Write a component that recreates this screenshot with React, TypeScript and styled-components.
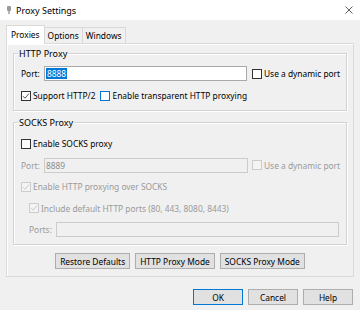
import React from "react";
import styled, { createGlobalStyle, css } from "styled-components";

const GlobalStyle = createGlobalStyle`
  html, body {
    margin: 0;
    padding: 0;
    background: #f0f0f0;
  }
  body {
    font-family: "Noto Sans", "Segoe UI", Arial, sans-serif;
    font-size: 8.4px;
    color: #000;
  }
`;

const Window = styled.div`
  width: 360px;
  height: 310px;
  background: #f0f0f0;
  display: flex;
  flex-direction: column;
  overflow: hidden;
  position: relative;
`;

const TitleBar = styled.div`
  height: 20px;
  background: #fff;
  display: flex;
  align-items: center;
  padding: 0 6px 0 6px;
  font-size: 9px;
`;

const TitleText = styled.span`
  margin-left: 4px;
`;

const CloseButton = styled.div`
  margin-left: auto;
  width: 9px;
  height: 9px;
  display: flex;
  align-items: center;
  justify-content: center;
  margin-right: 1px;
`;

const Body = styled.div`
  flex: 1;
  padding: 6px 6px 0 6px;
  display: flex;
  flex-direction: column;
`;

const TabBar = styled.div`
  display: flex;
  align-items: flex-end;
  height: 17px;
`;

const Tab = styled.div<{ $active?: boolean }>`
  height: 15px;
  display: flex;
  align-items: center;
  padding: 0 3px;
  border: 1px solid #d9d9d9;
  border-bottom: none;
  margin-left: -1px;
  background: #f0f0f0;
  ${(p) =>
    p.$active &&
    css`
      height: 17px;
      margin-left: 0;
      background: #fff;
      position: relative;
      z-index: 1;
      margin-bottom: -1px;
      padding: 0 4px 1px 4px;
    `}
`;

const Pane = styled.div`
  height: 234px;
  box-sizing: border-box;
  border: 1px solid #dadada;
  box-shadow: inset 1px 1px 0 #fff;
  display: flex;
  flex-direction: column;
  padding: 9px 6px 0 6px;
`;

const GroupBox = styled.div<{ $rowGap: number; $padTop: number }>`
  position: relative;
  border: 1px solid #d3d3d3;
  box-shadow: inset 1px 1px 0 #fff, 1px 1px 0 #fff;
  display: flex;
  flex-direction: column;
  gap: ${(p) => p.$rowGap}px;
  padding: ${(p) => p.$padTop}px 7px 7px 7px;
  & + & {
    margin-top: 11px;
  }
`;

const Legend = styled.span`
  position: absolute;
  top: -7px;
  left: 4px;
  padding: 0 1px;
  background: #f0f0f0;
  font-size: 9px;
`;

const Row = styled.div<{ $indent?: number }>`
  height: 15px;
  display: flex;
  align-items: center;
  padding-left: ${(p) => p.$indent ?? 0}px;
`;

const FieldLabel = styled.span<{ $w: number; $disabled?: boolean }>`
  width: ${(p) => p.$w}px;
  flex: none;
  color: ${(p) => (p.$disabled ? "#9a9a9a" : "#000")};
`;

const TextInput = styled.div<{ $w?: number; $disabled?: boolean }>`
  box-sizing: border-box;
  height: 15px;
  ${(p) => (p.$w ? `width: ${p.$w}px; flex: none;` : "flex: 1;")}
  border: 1px solid ${(p) => (p.$disabled ? "#cccccc" : "#a9a9a9")};
  background: ${(p) => (p.$disabled ? "#f0f0f0" : "#fff")};
  color: ${(p) => (p.$disabled ? "#8c8c8c" : "#000")};
  display: flex;
  align-items: center;
  padding-left: 1px;
`;

const Selected = styled.span`
  background: #0078d7;
  color: #fff;
  padding: 0 1px;
  line-height: 11px;
`;

const CheckItem = styled.label<{ $disabled?: boolean; $gapAfter?: number }>`
  display: flex;
  align-items: center;
  gap: 2px;
  color: ${(p) => (p.$disabled ? "#9a9a9a" : "#000")};
  margin-right: ${(p) => p.$gapAfter ?? 0}px;
  white-space: nowrap;
  flex: none;
`;

const Box = styled.span<{ $disabled?: boolean; $focus?: boolean }>`
  box-sizing: border-box;
  width: 10px;
  height: 10px;
  flex: none;
  border: 1px solid
    ${(p) => (p.$disabled ? "#cccccc" : p.$focus ? "#0078d7" : "#333")};
  background: ${(p) => (p.$disabled ? "#f4f4f4" : "#fff")};
  display: flex;
  align-items: center;
  justify-content: center;
`;

const Spacer = styled.span<{ $w: number }>`
  width: ${(p) => p.$w}px;
  flex: none;
`;

const ButtonRow = styled.div<{ $justify: string }>`
  display: flex;
  justify-content: ${(p) => p.$justify};
  gap: 5px;
`;

const PaneButtons = styled(ButtonRow)`
  margin-top: 8px;
`;

const DialogButtons = styled(ButtonRow)`
  margin-top: 12px;
  padding-right: 1px;
`;

const Button = styled.div<{ $w?: number; $default?: boolean }>`
  box-sizing: border-box;
  height: 16px;
  ${(p) => (p.$w ? `width: ${p.$w}px;` : "padding: 0 4px;")}
  border: 1px solid ${(p) => (p.$default ? "#0078d7" : "#adadad")};
  background: #e1e1e1;
  display: flex;
  align-items: center;
  justify-content: center;
  white-space: nowrap;
`;

function Check({
  checked,
  disabled,
  focus,
  label,
  gapAfter,
}: {
  checked?: boolean;
  disabled?: boolean;
  focus?: boolean;
  label: string;
  gapAfter?: number;
}) {
  return (
    <CheckItem $disabled={disabled} $gapAfter={gapAfter}>
      <Box $disabled={disabled} $focus={focus}>
        {checked && (
          <svg width="8" height="8" viewBox="0 0 8 8">
            <path
              d="M1 4.2 L3 6.2 L7 1.5"
              fill="none"
              stroke={disabled ? "#c4c4c4" : "#444"}
              strokeWidth="0.9"
            />
          </svg>
        )}
      </Box>
      {label}
    </CheckItem>
  );
}

export default function App() {
  return (
    <Window>
      <GlobalStyle />
      <TitleBar>
        <svg width="6" height="9" viewBox="0 0 6 9">
          <rect x="1" y="0" width="4" height="5" rx="1" fill="#9a9a9a" />
          <rect x="2" y="5" width="2" height="3" fill="#b5b5b5" />
        </svg>
        <TitleText>Proxy Settings</TitleText>
        <CloseButton>
          <svg width="8" height="8" viewBox="0 0 8 8">
            <path d="M0.5 0.5 L7.5 7.5 M7.5 0.5 L0.5 7.5" stroke="#333" strokeWidth="0.8" />
          </svg>
        </CloseButton>
      </TitleBar>
      <Body>
        <TabBar>
          <Tab $active>Proxies</Tab>
          <Tab>Options</Tab>
          <Tab>Windows</Tab>
        </TabBar>
        <Pane>
          <GroupBox $padTop={12} $rowGap={7}>
            <Legend>HTTP Proxy</Legend>
            <Row>
              <FieldLabel $w={23}>Port:</FieldLabel>
              <TextInput $w={203}>
                <Selected>8888</Selected>
              </TextInput>
              <Spacer $w={5} />
              <Check label="Use a dynamic port" />
            </Row>
            <Row>
              <Check checked label="Support HTTP/2" gapAfter={5} />
              <Check focus label="Enable transparent HTTP proxying" />
            </Row>
          </GroupBox>
          <GroupBox $padTop={13} $rowGap={6.5}>
            <Legend>SOCKS Proxy</Legend>
            <Row>
              <Check label="Enable SOCKS proxy" />
            </Row>
            <Row>
              <FieldLabel $w={23} $disabled>
                Port:
              </FieldLabel>
              <TextInput $w={204} $disabled>
                8889
              </TextInput>
              <Spacer $w={4} />
              <Check disabled label="Use a dynamic port" />
            </Row>
            <Row>
              <Check checked disabled label="Enable HTTP proxying over SOCKS" />
            </Row>
            <Row $indent={8}>
              <Check
                checked
                disabled
                label="Include default HTTP ports (80, 443, 8080, 8443)"
              />
            </Row>
            <Row $indent={8}>
              <FieldLabel $w={27} $disabled>
                Ports:
              </FieldLabel>
              <TextInput $disabled />
            </Row>
          </GroupBox>
          <PaneButtons $justify="center">
            <Button>Restore Defaults</Button>
            <Button>HTTP Proxy Mode</Button>
            <Button>SOCKS Proxy Mode</Button>
          </PaneButtons>
        </Pane>
        <DialogButtons $justify="flex-end">
          <Button $w={50} $default>
            OK
          </Button>
          <Button $w={50}>Cancel</Button>
          <Button $w={50}>Help</Button>
        </DialogButtons>
      </Body>
    </Window>
  );
}
